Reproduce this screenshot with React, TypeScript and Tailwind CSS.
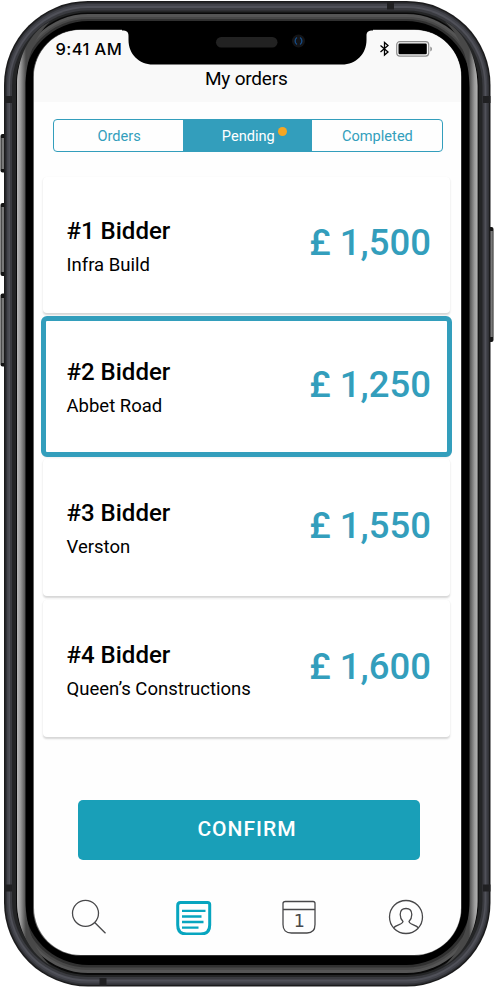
import { useState } from 'react';

const bidders = [
  { id: 1, company: 'Infra Build', price: '1,500' },
  { id: 2, company: 'Abbet Road', price: '1,250' },
  { id: 3, company: 'Verston', price: '1,550' },
  { id: 4, company: 'Queen’s Constructions', price: '1,600' },
];

const tabs = ['Orders', 'Pending', 'Completed'];

function PhoneFrame() {
  return (
    <svg className="absolute inset-0" width="494" height="988" viewBox="0 0 494 988" fill="none">
      <defs>
        <linearGradient id="glossL" x1="17" x2="26" y1="0" y2="0" gradientUnits="userSpaceOnUse">
          <stop offset="0" stopColor="#b8b8b8" />
          <stop offset="0.4" stopColor="#999" />
          <stop offset="1" stopColor="#484848" />
        </linearGradient>
        <linearGradient id="glossR" x1="478" x2="469" y1="0" y2="0" gradientUnits="userSpaceOnUse">
          <stop offset="0" stopColor="#b8b8b8" />
          <stop offset="0.4" stopColor="#999" />
          <stop offset="1" stopColor="#484848" />
        </linearGradient>
        <linearGradient id="key" x1="0" x2="1" y1="0" y2="0">
          <stop offset="0" stopColor="#333" />
          <stop offset="0.45" stopColor="#888" />
          <stop offset="1" stopColor="#555" />
        </linearGradient>
      </defs>

      {/* side keys */}
      <rect x="0.5" y="134" width="6" height="38.5" rx="2" fill="#151515" />
      <rect x="1" y="138" width="4" height="31" fill="url(#key)" />
      <rect x="0.5" y="203" width="6" height="73" rx="2" fill="#151515" />
      <rect x="1" y="207" width="4" height="65" fill="url(#key)" />
      <rect x="0.5" y="293.5" width="6" height="73" rx="2" fill="#151515" />
      <rect x="1" y="298" width="4" height="65" fill="url(#key)" />
      <rect x="488" y="227" width="5.5" height="115" rx="2" fill="#151515" />
      <rect x="489" y="231" width="4" height="106" fill="url(#key)" />

      {/* steel band, from the outer edge inwards */}
      <rect x="4" y="1" width="486.5" height="985.5" rx="84" fill="#1b1b1c" />
      <rect x="5.5" y="2.5" width="483.5" height="982.5" rx="82.5" fill="#323338" />
      <rect x="7" y="4" width="480.5" height="979.5" rx="81" fill="#43444b" />
      <rect x="8.5" y="6" width="477.5" height="975.5" rx="79.5" fill="#505159" />
      <rect x="10" y="8" width="474.5" height="971.5" rx="78" fill="#3a3b40" />
      <rect x="12" y="10.5" width="470.5" height="966.5" rx="76" fill="#242526" />
      <rect x="16" y="12.5" width="462.5" height="962.5" rx="72" fill="#080808" />
      <rect x="17" y="14" width="460.5" height="959" rx="71" fill="#555" />
      <rect x="19" y="17" width="456.5" height="953" rx="69" fill="#484848" />
      <rect x="21" y="19" width="452.5" height="948.5" rx="67" fill="#303030" />
      <rect x="23.5" y="21" width="447.5" height="944" rx="65" fill="#000" />

      {/* gloss on the long sides */}
      <path d="M50 21.5C30 32 17 57 17 86V901C17 931 31 954 51 966C36 953 25.5 929 25.5 900V88C25.5 60 34 37 50 21.5Z" fill="url(#glossL)" />
      <path d="M445 21.5C465 32 477.5 57 477.5 86V901C477.5 931 464 954 444 966C459 953 469.5 929 469.5 900V88C469.5 60 461 37 445 21.5Z" fill="url(#glossR)" />

      {/* antenna lines */}
      <g fill="#202022">
        <rect x="4" y="96" width="8" height="7" />
        <rect x="483" y="96" width="7.5" height="7" />
        <rect x="387" y="1.5" width="7" height="8" />
        <rect x="4" y="884.5" width="8" height="7" />
        <rect x="483" y="884.5" width="7.5" height="7" />
        <rect x="99.5" y="978" width="7" height="8" />
      </g>
      <rect x="33" y="29.5" width="428.5" height="926" rx="47.5" fill="#666" />
    </svg>
  );
}

function Notch() {
  return (
    <svg className="absolute left-[120px] top-[28px]" width="254" height="38" viewBox="120 28 254 38" fill="none">
      <path d="M122 28V30.5C127 30.5 128.5 32 128.5 36V40C128.5 54 139 64.5 153 64.5H342C356 64.5 366.5 54 366.5 40V36C366.5 32 368 30.5 373 30.5V28Z" fill="#000" />
      <rect x="216" y="37" width="61.5" height="10.5" rx="5.2" fill="#222" />
      <circle cx="298.5" cy="41" r="6.5" fill="#141416" />
      <path d="M297 37.5C294.5 39 294.5 43 297 44.5M300 37.5C302.5 39 302.5 43 300 44.5" stroke="#164d88" strokeWidth="1.3" />
    </svg>
  );
}

function StatusBar() {
  return (
    <div className="flex h-[34px] items-start justify-between pl-[22px] pr-[28px] pt-[8px]">
      <span className="font-[Inter,sans-serif] text-[16.5px] font-medium leading-[22px] tracking-[0.4px]">9:41 AM</span>
      <div className="flex items-center gap-[6px] pt-[3px]">
        <svg width="11" height="16" viewBox="0 0 11 16" fill="none" stroke="#000" strokeWidth="1.3">
          <path d="M1.5 4.5L9 11L5.5 14V1.5L9 4.5L1.5 11" />
        </svg>
        <svg width="37" height="16" viewBox="0 0 37 16" fill="none">
          <rect x="0.7" y="0.7" width="32" height="14.4" rx="3" stroke="#8e8e8e" strokeWidth="1.2" />
          <rect x="2.5" y="2.5" width="28.3" height="10.8" rx="1.2" fill="#000" />
          <path d="M34.3 5.5C36.5 6.5 36.5 9.5 34.3 10.5Z" fill="#8e8e8e" />
        </svg>
      </div>
    </div>
  );
}

function TabBar() {
  return (
    <nav className="mt-auto flex h-[57px] shrink-0 items-start justify-between pl-[36px] pr-[36.5px]">
      <button aria-label="Search">
        <svg width="36" height="37" viewBox="0 0 36 37" fill="none" stroke="#48484a" strokeWidth="1.3">
          <circle cx="15.5" cy="15.3" r="13" />
          <path d="M24.7 24.5L35.5 35.2" />
        </svg>
      </button>
      <button aria-label="Orders">
        <svg width="36" height="37" viewBox="0 0 36 37" fill="none" stroke="#07a5bf">
          <path d="M4.5 4.5H31.5Q33.7 4.5 33.7 6.5V27Q33.7 36 24.7 36H10.5Q1.7 36 1.7 27V7.5Q1.700 4.5 4.5 4.5Z" strokeWidth="3" />
          <path d="M6 12.8H29.5M6 18.5H25.5M6 24H27.5M6 29.7H22.5" strokeWidth="2.3" />
        </svg>
      </button>
      <button aria-label="Calendar">
        <svg className="-ml-[1.5px] mr-[1.5px]" width="36" height="37" viewBox="0 0 36 37" fill="none" stroke="#48484a" strokeWidth="1.3">
          <path d="M4.5 3.5H32Q34 3.5 34 5.5V26.5Q34 35 26 35H10.5Q2 35 2 26.5V5.500Q2 3.5 4.500 3.5ZM2 11.5H34" />
          <text x="18.3" y="29.3" textAnchor="middle" fill="#48484a" stroke="none" className="font-['DejaVu_Sans',sans-serif] text-[17.5px]">1</text>
        </svg>
      </button>
      <button aria-label="Profile">
        <svg width="36" height="37" viewBox="0 0 36 37" fill="none" stroke="#48484a" strokeWidth="1.3">
          <circle cx="18" cy="19" r="16.5" />
          <path d="M5.5 30C8 26.5 14.5 27 15 23.5C13 21.5 12.2 19 12.2 16.5C12.2 12.5 14.5 10.5 18 10.5S23.8 12.5 23.8 16.5C23.8 19 23 21.5 21 23.5C21.5 27 28 26.5 30.5 30" />
        </svg>
      </button>
    </nav>
  );
}

export default function App() {
  const [tab, setTab] = useState('Pending');
  const [selected, setSelected] = useState(2);

  return (
    <div className="relative h-[988px] w-[494px] overflow-hidden bg-white px-[33.5px] pb-[33px] pt-[30px] font-[Roboto,sans-serif] text-black">
      <PhoneFrame />

      <main className="relative flex h-[925px] w-[427.5px] flex-col overflow-hidden rounded-[47px] bg-[#fefefe]">
        <header className="h-[72px] shrink-0 bg-[#f9f9f9]">
          <StatusBar />
          <h1 className="pr-[2px] text-center text-[19px] leading-[30px] tracking-[-0.2px]">My orders</h1>
        </header>

        <div className="ml-[19.5px] mr-[18.5px] mt-[17px] flex h-[32.5px] shrink-0 overflow-hidden rounded-[4px] border border-[#339ebc]">
          {tabs.map((name) => (
            <button
              key={name}
              onClick={() => setTab(name)}
              className={`relative flex-1 pl-px pt-px text-[14.6px] leading-[30px] ${
                tab === name ? 'bg-[#339ebc] text-white' : 'text-[#339ebc]'
              }`}
            >
              {name}
              {name === 'Pending' && (
                <span className="absolute right-[25px] top-[6.5px] h-[9px] w-[9px] rounded-full bg-[#f5a623]" />
              )}
            </button>
          ))}
        </div>

        <ul className="ml-[9.5px] mr-[11px] mt-[25px] flex flex-col gap-[4.5px]">
          {bidders.map((b) => (
            <li
              key={b.id}
              onClick={() => setSelected(b.id)}
              className={`flex h-[136.8px] items-center justify-between rounded-[4px] bg-white pl-[23.5px] pr-[19px] shadow-[0_1.5px_2px_rgba(0,0,0,0.16)] ${
                selected === b.id ? 'outline-5 -outline-offset-3 outline-[#339ebc]' : ''
              }`}
            >
              <div className="pt-[6px]">
                <h2 className="text-[24px] font-medium leading-[34px]">#{b.id} Bidder</h2>
                <p className="text-[18.5px] leading-[34px]">{b.company}</p>
              </div>
              <span className="pb-[3px] text-[36.5px] font-medium leading-[44px] text-[#339ebc]">£ {b.price}</span>
            </li>
          ))}
        </ul>

        <button className="ml-[44px] mr-[41.5px] mt-[62.7px] h-[60.5px] shrink-0 rounded-[5px] bg-[#199fb8] pr-[3px] text-[21px] font-medium tracking-[1px] text-white">
          CONFIRM
        </button>

        <TabBar />
      </main>

      <Notch />
    </div>
  );
}
